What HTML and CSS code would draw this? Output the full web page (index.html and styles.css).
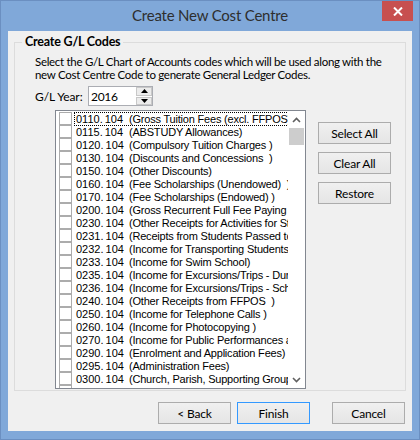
FILE: index.html
```html
<!DOCTYPE html>
<html>
<head>
<meta charset="utf-8">
<link rel="stylesheet" href="styles.css">
</head>
<body>
<div class="window">
  <div class="titlebar">
    <div class="title">Create New Cost Centre</div>
    <div class="close">
      <svg width="10" height="9" viewBox="0 0 10 9"><path d="M1 0.5 L9 8.5 M9 0.5 L1 8.5" stroke="#fff" stroke-width="2"/></svg>
    </div>
  </div>
  <div class="client">
    <fieldset class="group">
      <legend class="group-label">Create G/L Codes</legend>
      <p class="desc">Select the G/L Chart of Accounts codes which will be used along with the<br>new Cost Centre Code to generate General Ledger Codes.</p>
      <div class="year-row">
        <span class="year-label">G/L Year:</span>
        <div class="spin">
          <span class="spin-value">2016</span>
          <div class="spin-btns">
            <div class="spin-btn"><svg width="7" height="4" viewBox="0 0 7 4"><path d="M3.5 0 L7 4 L0 4 Z" fill="#000"/></svg></div>
            <div class="spin-btn"><svg width="7" height="4" viewBox="0 0 7 4"><path d="M0 0 L7 0 L3.5 4 Z" fill="#000"/></svg></div>
          </div>
        </div>
      </div>
      <div class="list-row">
        <div class="listbox">
          <div class="items">
            <div class="item"><span class="cb"></span><span class="text focus"><span class="code">0110.<span class="sub">104</span></span>(Gross Tuition Fees (excl. FFPOS)</span></div>
            <div class="item"><span class="cb"></span><span class="text"><span class="code">0115.<span class="sub">104</span></span>(ABSTUDY Allowances)</span></div>
            <div class="item"><span class="cb"></span><span class="text"><span class="code">0120.<span class="sub">104</span></span>(Compulsory Tuition Charges )</span></div>
            <div class="item"><span class="cb"></span><span class="text"><span class="code">0130.<span class="sub">104</span></span>(Discounts and Concessions&nbsp; )</span></div>
            <div class="item"><span class="cb"></span><span class="text"><span class="code">0150.<span class="sub">104</span></span>(Other Discounts)</span></div>
            <div class="item"><span class="cb"></span><span class="text"><span class="code">0160.<span class="sub">104</span></span>(Fee Scholarships (Unendowed)&nbsp; )</span></div>
            <div class="item"><span class="cb"></span><span class="text"><span class="code">0170.<span class="sub">104</span></span>(Fee Scholarships (Endowed) )</span></div>
            <div class="item"><span class="cb"></span><span class="text"><span class="code">0200.<span class="sub">104</span></span>(Gross Recurrent Full Fee Paying Overseas Students)</span></div>
            <div class="item"><span class="cb"></span><span class="text"><span class="code">0230.<span class="sub">104</span></span>(Other Receipts for Activities for Students)</span></div>
            <div class="item"><span class="cb"></span><span class="text"><span class="code">0231.<span class="sub">104</span></span>(Receipts from Students Passed to Others)</span></div>
            <div class="item"><span class="cb"></span><span class="text"><span class="code">0232.<span class="sub">104</span></span>(Income for Transporting Students)</span></div>
            <div class="item"><span class="cb"></span><span class="text"><span class="code">0233.<span class="sub">104</span></span>(Income for Swim School)</span></div>
            <div class="item"><span class="cb"></span><span class="text"><span class="code">0235.<span class="sub">104</span></span>(Income for Excursions/Trips - During School)</span></div>
            <div class="item"><span class="cb"></span><span class="text"><span class="code">0236.<span class="sub">104</span></span>(Income for Excursions/Trips - School Holidays)</span></div>
            <div class="item"><span class="cb"></span><span class="text"><span class="code">0240.<span class="sub">104</span></span>(Other Receipts from FFPOS&nbsp; )</span></div>
            <div class="item"><span class="cb"></span><span class="text"><span class="code">0250.<span class="sub">104</span></span>(Income for Telephone Calls )</span></div>
            <div class="item"><span class="cb"></span><span class="text"><span class="code">0260.<span class="sub">104</span></span>(Income for Photocopying )</span></div>
            <div class="item"><span class="cb"></span><span class="text"><span class="code">0270.<span class="sub">104</span></span>(Income for Public Performances and Events)</span></div>
            <div class="item"><span class="cb"></span><span class="text"><span class="code">0290.<span class="sub">104</span></span>(Enrolment and Application Fees)</span></div>
            <div class="item"><span class="cb"></span><span class="text"><span class="code">0295.<span class="sub">104</span></span>(Administration Fees)</span></div>
            <div class="item"><span class="cb"></span><span class="text"><span class="code">0300.<span class="sub">104</span></span>(Church, Parish, Supporting Groups)</span></div>
            <div class="item"><span class="cb"></span><span class="text"><span class="code">0310.<span class="sub">104</span></span>(Donations)</span></div>
          </div>
          <div class="scrollbar">
            <div class="sb-arrow"><svg width="9" height="6" viewBox="0 0 9 6"><path d="M1 5 L4.5 1.5 L8 5" fill="none" stroke="#606060" stroke-width="1.6"/></svg></div>
            <div class="sb-thumb"></div>
            <div class="sb-arrow sb-down"><svg width="9" height="6" viewBox="0 0 9 6"><path d="M1 1 L4.5 4.5 L8 1" fill="none" stroke="#606060" stroke-width="1.6"/></svg></div>
          </div>
        </div>
        <div class="side-buttons">
          <button class="btn">Select All</button>
          <button class="btn">Clear All</button>
          <button class="btn">Restore</button>
        </div>
      </div>
    </fieldset>
    <div class="footer">
      <button class="btn">&lt; Back</button>
      <button class="btn default">Finish</button>
      <button class="btn cancel">Cancel</button>
    </div>
  </div>
</div>
</body>
</html>
```
FILE: styles.css
```css
body {
  margin: 0;
  font-family: Lato, "Open Sans", sans-serif;
}

.window {
  width: 420px;
  height: 440px;
  box-sizing: border-box;
  background: #80a8d9;
  border: 1px solid #6b8fc1;
  display: flex;
  flex-direction: column;
}

.titlebar {
  height: 30px;
  display: grid;
  grid-template-columns: 1fr auto 1fr;
  align-items: start;
}

.title {
  grid-column: 2;
  font-size: 15px;
  letter-spacing: -0.2px;
  line-height: 29px;
  color: #2e2e2e;
}

.close {
  grid-column: 3;
  justify-self: end;
  width: 31px;
  height: 20px;
  margin-right: 6px;
  background: #c75050;
  display: flex;
  align-items: center;
  justify-content: center;
}

.client {
  margin: 0 7px 8px;
  height: 400px;
  background: #f0f0f0;
  display: flex;
  flex-direction: column;
  padding: 4px 6px 0;
  box-sizing: border-box;
  font-size: 11.5px;
  letter-spacing: -0.3px;
  color: #000;
}

.group {
  margin: 0;
  border: 1px solid #dcdcdc;
  padding: 0 4px 1px 20px;
  height: 356px;
  box-sizing: border-box;
  min-width: 0;
}

.group-label {
  font-weight: bold;
  font-size: 12.5px;
  letter-spacing: -0.2px;
  line-height: 14px;
  padding: 0 3px;
  margin-left: -13px;
}

.desc {
  margin: 6px 0 0;
  line-height: 13px;
  white-space: nowrap;
}

.year-row {
  margin-top: 5px;
  display: flex;
  align-items: center;
}

.year-label {
  width: 53px;
  font-size: 12px;
  letter-spacing: -0.1px;
}

.spin {
  width: 65px;
  height: 20px;
  box-sizing: border-box;
  border: 1px solid #abadb3;
  background: #fff;
  display: flex;
  align-items: center;
  font-size: 12px;
}

.spin-value {
  flex: 1;
  padding-left: 2px;
}

.spin-btns {
  width: 16px;
  height: 18px;
  display: flex;
  flex-direction: column;
  gap: 1px;
}

.spin-btn {
  flex: 1;
  background: #ececec;
  border: 1px solid #c8c8c8;
  display: flex;
  align-items: center;
  justify-content: center;
}

.list-row {
  margin: 4px 0 0 20px;
  display: flex;
  gap: 12px;
}

.listbox {
  width: 251px;
  height: 279px;
  box-sizing: border-box;
  border: 1px solid #828790;
  background: #fff;
  display: flex;
  overflow: hidden;
}

.items {
  flex: 1;
  min-width: 0;
  overflow: hidden;
  padding-top: 1px;
  font-family: "Liberation Sans", Arial, sans-serif;
  font-size: 11px;
  letter-spacing: -0.2px;
}

.item {
  height: 13px;
  display: flex;
  align-items: center;
  white-space: nowrap;
}

.cb {
  width: 11px;
  height: 11px;
  flex: none;
  border: 1px solid #acacac;
  background: #fff;
  margin: 0 4px 0 3px;
}

.text {
  line-height: 12px;
  padding: 0 1px;
  border: 1px solid transparent;
  margin-left: -2px;
}

.text.focus {
  border: 1px dotted #000;
}

.code {
  display: inline-block;
  width: 53px;
  letter-spacing: 0;
}

.sub {
  margin-left: 2px;
}

.scrollbar {
  width: 17px;
  flex: none;
  background: #fff;
  display: flex;
  flex-direction: column;
  align-items: center;
}

.sb-arrow {
  height: 17px;
  width: 17px;
  display: flex;
  align-items: center;
  justify-content: center;
}

.sb-thumb {
  width: 15px;
  height: 17px;
  background: #cdcdcd;
}

.sb-down {
  margin-top: auto;
}

.side-buttons {
  margin-top: 12px;
  display: flex;
  flex-direction: column;
  gap: 8px;
}

.btn {
  width: 73px;
  height: 22px;
  box-sizing: border-box;
  border: 1px solid #acacac;
  background: linear-gradient(#f0f0f0, #e5e5e5);
  font-family: Lato, "Open Sans", sans-serif;
  font-size: 12px;
  letter-spacing: -0.2px;
  color: #000;
  padding: 0;
}

.btn.default {
  border-color: #3399ff;
}

.footer {
  display: flex;
  gap: 6px;
  justify-content: flex-end;
  padding: 11px 1px 0 0;
}

.btn.cancel {
  margin-left: 16px;
}
```
